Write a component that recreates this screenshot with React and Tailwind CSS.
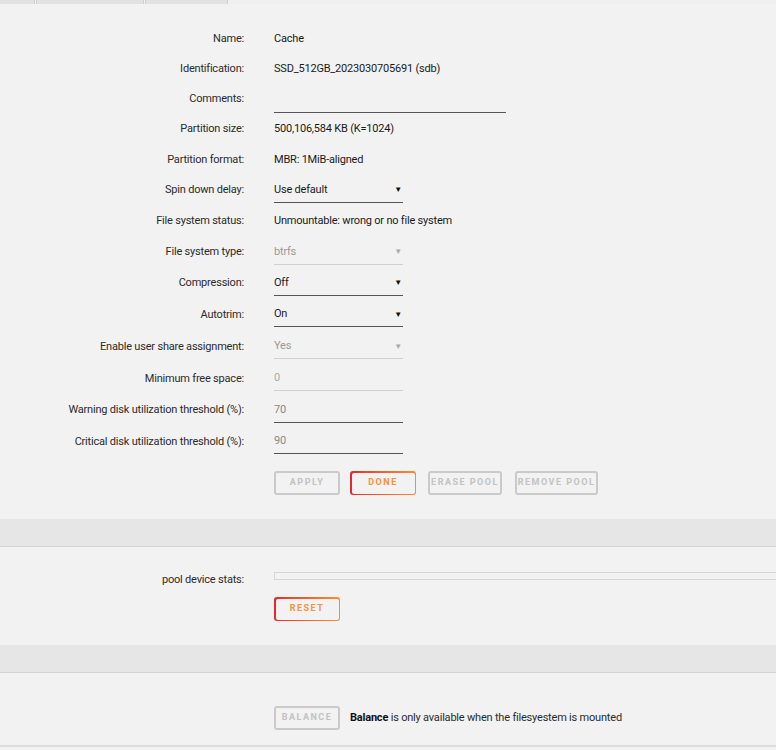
import React from "react";

const FONT = { fontFamily: 'Roboto, "Liberation Sans", sans-serif' };

function Arrow({ disabled }) {
  return (
    <span className={`text-[8px] leading-none ${disabled ? "text-[#aaa]" : "text-[#111]"}`}>▼</span>
  );
}

function Select({ value, disabled }) {
  return (
    <div
      className={`w-[129px] h-[24px] flex items-center justify-between pr-[1px] border-b ${
        disabled ? "border-[#cfcfcf] text-[#999]" : "border-[#555] text-[#1a1a1a]"
      }`}
    >
      <span>{value}</span>
      <Arrow disabled={disabled} />
    </div>
  );
}

function Input({ value, disabled }) {
  return (
    <div
      className={`w-[129px] h-[24px] flex items-center border-b ${
        disabled ? "border-[#cfcfcf] text-[#aaa]" : "border-[#555] text-[#888]"
      }`}
    >
      <span>{value}</span>
    </div>
  );
}

function Row({ label, h, children }) {
  return (
    <div className="flex items-center" style={{ height: h }}>
      <div className="w-[244px] shrink-0 text-right text-[#2b2b2b]">{label}</div>
      <div className="ml-[30px] flex items-center text-[#1a1a1a]">{children}</div>
    </div>
  );
}

function GrayButton({ children, w }) {
  return (
    <div
      className={`${w} shrink-0 h-[24px] flex items-center justify-center whitespace-nowrap border-2 border-[#cacaca] rounded-[3px] text-[9px] font-bold tracking-[1.5px] text-[#c2c2c2]`}
    >
      {children}
    </div>
  );
}

function OrangeButton({ children }) {
  return (
    <div className="w-[66px] shrink-0 h-[24px] rounded-[3px] p-[1.5px] bg-gradient-to-r from-[#e22828] to-[#ff8c2f]">
      <div className="w-full h-full rounded-[2px] bg-[#f2f2f2] flex items-center justify-center whitespace-nowrap text-[9px] font-bold tracking-[1.5px] text-[#f7913a]">
        {children}
      </div>
    </div>
  );
}

export default function App() {
  return (
    <div className="w-[776px] h-[750px] overflow-hidden bg-[#f2f2f2] text-[11px] tracking-[-0.2px]" style={FONT}>
      {/* tabs strip */}
      <div className="flex h-[4px]">
        <div className="w-[35px] bg-[#e2e2e2] border-r border-[#cfcfcf]" />
        <div className="w-[1px]" />
        <div className="w-[108px] bg-[#e2e2e2] border-l border-r border-[#cfcfcf]" />
        <div className="w-[1px]" />
        <div className="w-[83px] bg-[#e2e2e2] border-l border-r border-[#cfcfcf]" />
        <div className="flex-1 bg-[#f0f0f0]" />
      </div>

      <div className="pt-[20px]">
        <Row label="Name:" h={30}>Cache</Row>
        <Row label="Identification:" h={30}>SSD_512GB_2023030705691 (sdb)</Row>
        <Row label="Comments:" h={30}>
          <div className="w-[232px] h-[26px] border-b border-[#555] mt-[1px]" />
        </Row>
        <Row label="Partition size:" h={31}>500,106,584 KB (K=1024)</Row>
        <Row label="Partition format:" h={30}>MBR: 1MiB-aligned</Row>
        <Row label="Spin down delay:" h={31}>
          <Select value="Use default" />
        </Row>
        <Row label="File system status:" h={31}>Unmountable: wrong or no file system</Row>
        <Row label="File system type:" h={31}>
          <Select value="btrfs" disabled />
        </Row>
        <Row label="Compression:" h={31}>
          <Select value="Off" />
        </Row>
        <Row label="Autotrim:" h={32}>
          <Select value="On" />
        </Row>
        <Row label="Enable user share assignment:" h={32}>
          <Select value="Yes" disabled />
        </Row>
        <Row label="Minimum free space:" h={32}>
          <Input value="0" disabled />
        </Row>
        <Row label="Warning disk utilization threshold (%):" h={31}>
          <Input value="70" />
        </Row>
        <Row label="Critical disk utilization threshold (%):" h={32}>
          <Input value="90" />
        </Row>

        <div className="flex items-center ml-[274px] mt-[13px]">
          <GrayButton w="w-[66px]">APPLY</GrayButton>
          <div className="w-[10px] shrink-0" />
          <OrangeButton>DONE</OrangeButton>
          <div className="w-[12px] shrink-0" />
          <GrayButton w="w-[74px]">ERASE POOL</GrayButton>
          <div className="w-[13px] shrink-0" />
          <GrayButton w="w-[83px]">REMOVE POOL</GrayButton>
        </div>
      </div>

      {/* band 1 */}
      <div className="mt-[24px] h-[28px] bg-[#e6e6e6] border-b border-[#d4d4d4]" />

      {/* pool device stats */}
      <div className="h-[98px]">
        <div className="flex items-start pt-[25px]">
          <div className="w-[244px] shrink-0 text-right text-[#2b2b2b]">pool device stats:</div>
          <div className="ml-[30px] shrink-0 flex flex-col">
            <div className="w-[520px] h-[8px] border border-[#d6d6d6] bg-[#f2f2f2]" />
            <div className="mt-[17px]">
              <OrangeButton>RESET</OrangeButton>
            </div>
          </div>
        </div>
      </div>

      {/* band 2 */}
      <div className="h-[28px] bg-[#e6e6e6] border-b border-[#d4d4d4]" />

      {/* balance */}
      <div className="h-[74px] border-b-2 border-[#dcdcdc]">
        <div className="flex items-center ml-[274px] pt-[33px]">
          <GrayButton w="w-[66px]">BALANCE</GrayButton>
          <span className="ml-[10px] text-[#2b2b2b]">
            <b className="text-[#111]">Balance</b> is only available when the filesyestem is mounted
          </span>
        </div>
      </div>
    </div>
  );
}
